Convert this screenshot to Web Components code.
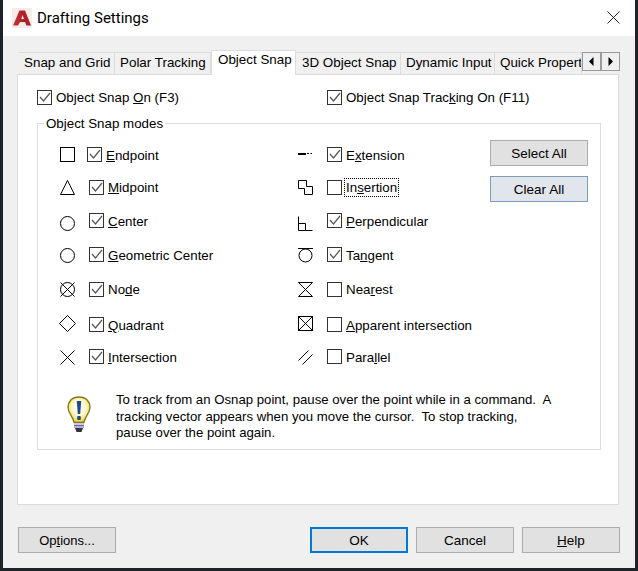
<!DOCTYPE html>
<html>
<head>
<meta charset="utf-8">
<title>Drafting Settings</title>
<style>
  html, body { margin: 0; padding: 0; background: #1d2329; }
  body { width: 638px; height: 571px; overflow: hidden; font: 13.33px "Liberation Sans", Arial, sans-serif; color: #000; }
</style>
</head>
<body>
<drafting-dialog></drafting-dialog>

<script>
const SNAP_ICONS = {
  square: '<rect x="0.5" y="0.5" width="14" height="14"/>',
  triangle: '<path d="M7.5 0.5 L14.5 14.5 H0.5 Z"/>',
  circle: '<circle cx="7.5" cy="7.5" r="7"/>',
  node: '<circle cx="7.5" cy="7.5" r="7"/><path d="M0.5 0.5 L14.5 14.5 M14.5 0.5 L0.5 14.5"/>',
  diamond: '<path d="M7.5 0.5 L15.5 8.5 L7.5 16.5 L-0.5 8.5 Z"/>',
  cross: '<path d="M0.5 0.5 L14.5 14.5 M14.5 0.5 L0.5 14.5"/>',
  extension: '<path d="M0 7 H8" stroke-width="2"/><path d="M9 6.5 H11 M12.5 6.5 H14"/>',
  insertion: '<path d="M0.5 0.5 H8.5 V6.5 H14.5 V14.5 H6.5 V8.5 H0.5 Z"/>',
  perpendicular: '<path d="M0.5 0.5 V14.5 H14.5 M0.5 7.5 H7.5 V14.5"/>',
  tangent: '<path d="M0 0.5 H15"/><circle cx="7.5" cy="7.5" r="6.5"/>',
  nearest: '<path d="M0.5 0.5 H14.5 L0.5 14.5 H14.5 Z"/>',
  apparent: '<rect x="0.5" y="0.5" width="14" height="14"/><path d="M0.5 0.5 L14.5 14.5 M14.5 0.5 L0.5 14.5"/>',
  parallel: '<path d="M0.5 10.5 L10.5 0.5 M4.5 14.5 L14.5 4.5"/>'
};

class SnapIcon extends HTMLElement {
  connectedCallback() {
    this.attachShadow({ mode: 'open' }).innerHTML = `
      <style>
        :host { display: block; width: 15px; height: 15px; }
        svg { display: block; fill: none; stroke: #000; stroke-width: 1; overflow: visible; }
      </style>
      <svg width="15" height="15" viewBox="0 0 15 15">${SNAP_ICONS[this.getAttribute('name')]}</svg>
    `;
  }
}
customElements.define('snap-icon', SnapIcon);

class SnapCheck extends HTMLElement {
  connectedCallback() {
    const on = this.hasAttribute('checked');
    const focus = this.hasAttribute('focused');
    this.attachShadow({ mode: 'open' }).innerHTML = `
      <style>
        :host { display: inline-flex; align-items: center; height: 15px; white-space: nowrap; }
        .box { width: 15px; height: 15px; box-sizing: border-box; border: 1px solid #333; background: #fff; flex: none; }
        svg { display: block; }
        .label { margin-left: 4px; line-height: 15px; }
        :host([low]) .label { padding-top: 2px; }
        .focus { outline: 1px dotted #000; outline-offset: 1px; }
      </style>
      <span class="box">${on ? '<svg width="13" height="13" viewBox="0 0 13 13"><path d="M2 6 L5.5 10 L12 2" fill="none" stroke="#555" stroke-width="1.2"/></svg>' : ''}</span>
      <span class="label ${focus ? 'focus' : ''}"><slot></slot></span>
    `;
  }
}
customElements.define('snap-check', SnapCheck);

class SnapRow extends HTMLElement {
  connectedCallback() {
    const dy = this.getAttribute('icon-dy') || 0;
    const dx = this.getAttribute('check-dx') || 0;
    this.attachShadow({ mode: 'open' }).innerHTML = `
      <style>
        :host { display: flex; height: 15px; align-items: flex-start; }
        .icon { width: 15px; margin-top: ${dy}px; flex: none; }
        .check { margin-left: ${dx}px; }
      </style>
      <div class="icon"><slot name="icon"></slot></div>
      <div class="check"><slot></slot></div>
    `;
  }
}
customElements.define('snap-row', SnapRow);

class DlgButton extends HTMLElement {
  connectedCallback() {
    this.attachShadow({ mode: 'open' }).innerHTML = `
      <style>
        :host { display: flex; flex: none; align-items: center; justify-content: center; box-sizing: border-box;
                width: 98px; height: 26px; background: #e1e1e1; border: 1px solid #adadad; font-size: 13.5px; }
        :host([hot]) { background: #e1e6ec; border-color: #7f9db9; }
        :host([primary]) { border: 2px solid #0078d7; }
      </style>
      <slot></slot>
    `;
  }
}
customElements.define('dlg-button', DlgButton);

class TitleBar extends HTMLElement {
  connectedCallback() {
    this.attachShadow({ mode: 'open' }).innerHTML = `
      <style>
        :host { display: flex; align-items: center; height: 36px; background: #fff; padding: 0 15px 0 9px; }
        .logo { width: 20px; height: 20px; margin-right: 5px; flex: none; display: block; }
        .title { flex: 1; font: 15px Roboto, "Noto Sans", sans-serif; color: #000; }
        .close { width: 13px; height: 13px; display: block; margin-top: -2px; }
      </style>
      <svg class="logo" viewBox="0 0 20 20">
        <defs>
          <linearGradient id="red" x1="0" y1="0" x2="1" y2="0">
            <stop offset="0" stop-color="#c6383c"/><stop offset="0.5" stop-color="#b02228"/><stop offset="1" stop-color="#a81e24"/>
          </linearGradient>
        </defs>
        <rect width="20" height="20" fill="#f8ece9"/>
        <path d="M1 17.5 L7.5 2.5 H13 L19 17.5 H14.5 L13 14 H8 L6 17.5 Z M9.2 11 H12 L10.6 7 Z" fill="url(#red)" fill-rule="evenodd"/>
      </svg>
      <span class="title">Drafting Settings</span>
      <svg class="close" viewBox="0 0 13 13"><path d="M0.5 0.5 L12.5 12.5 M12.5 0.5 L0.5 12.5" stroke="#222" stroke-width="1" fill="none"/></svg>
    `;
  }
}
customElements.define('title-bar', TitleBar);

class TabStrip extends HTMLElement {
  connectedCallback() {
    const tabs = [
      ['Snap and Grid', 96, 5], ['Polar Tracking', 96, 5], ['Object Snap', 85, 6],
      ['3D Object Snap', 105, 6], ['Dynamic Input', 94, 5], ['Quick Properties', 87, 5]
    ];
    const html = tabs.map(([t, w, p]) => `<div class="tab ${t === 'Object Snap' ? 'on' : ''}" style="width:${w}px;padding-left:${p}px"><span>${t}</span></div>`).join('');
    this.attachShadow({ mode: 'open' }).innerHTML = `
      <style>
        :host { display: flex; align-items: flex-end; height: 24px; padding-left: 2px; position: relative; z-index: 1; font-size: 13.4px; }
        .tab { box-sizing: border-box; height: 22px; background: #f0f0f0; border: 1px solid #dcdcdc; border-bottom: 0;
               border-left-width: 0; overflow: hidden; white-space: nowrap; line-height: 19px; flex: none; }
        .tab:first-child { border-left-width: 1px; }
        .on { background: #fff; border-width: 1px 1px 0 1px; margin-bottom: -1px; height: 25px; line-height: 18px; }
        .arrows { display: flex; flex: none; align-self: flex-start; margin-top: 2px; height: 19px; }
        .arrows div { box-sizing: border-box; width: 19px; height: 19px; background: #f0f0f0; border: 1px solid #9a9a9a;
                      display: flex; align-items: center; justify-content: center; }
        svg { display: block; }
      </style>
      ${html}
      <div class="arrows">
        <div><svg width="5" height="9"><path d="M4.5 0 V9 L0 4.5 Z"/></svg></div>
        <div><svg width="5" height="9"><path d="M0.5 0 V9 L5 4.5 Z"/></svg></div>
      </div>
    `;
  }
}
customElements.define('tab-strip', TabStrip);

class GroupBox extends HTMLElement {
  connectedCallback() {
    this.attachShadow({ mode: 'open' }).innerHTML = `
      <style>
        :host { display: block; }
        fieldset { margin: 0; padding: 0; border: 1px solid #dcdcdc; }
        legend { margin-left: 6px; padding: 0 2px; line-height: 15px; }
      </style>
      <fieldset><legend>${this.getAttribute('label')}</legend><slot></slot></fieldset>
    `;
  }
}
customElements.define('group-box', GroupBox);

class HintBulb extends HTMLElement {
  connectedCallback() {
    this.attachShadow({ mode: 'open' }).innerHTML = `
      <style>
        :host { display: block; width: 24px; height: 37px; }
        svg { display: block; }
      </style>
      <svg width="24" height="37" viewBox="0 0 24 37">
        <defs>
          <radialGradient id="glass" cx="50%" cy="42%" r="58%">
            <stop offset="0" stop-color="#ffffff"/><stop offset="0.55" stop-color="#fbf8cf"/><stop offset="0.85" stop-color="#efe25a"/><stop offset="1" stop-color="#d0bc30"/>
          </radialGradient>
        </defs>
        <path d="M12 1 C5 1 1 5.5 1 11.5 C1 17 6 20 7 26.5 H17 C18 20 23 17 23 11.5 C23 5.5 19 1 12 1 Z" fill="url(#glass)" stroke="#857520" stroke-width="1.3"/>
        <path d="M9.8 5 H14.2 L13.2 18 H10.8 Z" fill="#1c4a86"/>
        <rect x="10.2" y="20" width="3.6" height="4" rx="1" fill="#1c4a86"/>
        <rect x="7" y="27" width="10" height="2" fill="#c9c4e6"/>
        <rect x="7" y="29" width="10" height="1" fill="#6f6a9a"/>
        <rect x="7" y="30" width="10" height="2" fill="#b3add8"/>
        <path d="M8 32 H16 L14.5 36 H9.5 Z" fill="#33333f"/>
      </svg>
    `;
  }
}
customElements.define('hint-bulb', HintBulb);

class ObjectSnapPage extends HTMLElement {
  connectedCallback() {
    // each row: [icon, icon offset, checkbox offset, checked, label, focused]; low = label sits 1px lower
    const rows = [
      { low: true, cells: [['square', 0, -2, true, '<u>E</u>ndpoint'], ['extension', 0, 0, true, 'E<u>x</u>tension']] },
      { low: false, cells: [['triangle', 0, 0, true, '<u>M</u>idpoint'], ['insertion', 0, 0, false, 'In<u>s</u>ertion', true]] },
      { low: true, cells: [['circle', 3, 0, true, '<u>C</u>enter'], ['perpendicular', 3, 0, true, '<u>P</u>erpendicular']] },
      { low: true, cells: [['circle', 1, 0, true, '<u>G</u>eometric Center'], ['tangent', 1, 0, true, 'Ta<u>n</u>gent']] },
      { low: false, cells: [['node', 0, 0, true, 'No<u>d</u>e'], ['nearest', 0, 0, false, 'Nea<u>r</u>est']] },
      { low: true, cells: [['diamond', -2, 0, true, '<u>Q</u>uadrant'], ['apparent', -1, 0, false, '<u>A</u>pparent intersection']] },
      { low: true, cells: [['cross', 1, 0, true, '<u>I</u>ntersection'], ['parallel', 1, 0, false, 'Para<u>l</u>lel']] }
    ];
    const cell = ([icon, dy, dx, on, label, focus], low) => `
      <snap-row icon-dy="${dy}" check-dx="${14 + dx}">
        <snap-icon slot="icon" name="${icon}"></snap-icon>
        <snap-check ${on ? 'checked' : ''} ${focus ? 'focused' : ''} ${low ? 'low' : ''}>${label}</snap-check>
      </snap-row>`;
    const cells = rows.map(r => r.cells.map(c => cell(c, r.low)).join('')).join('');
    this.attachShadow({ mode: 'open' }).innerHTML = `
      <style>
        :host { display: block; box-sizing: border-box; height: 431px; background: #fff; border: 1px solid #dcdcdc;
                padding: 15px 17px 0 19px; }
        .top { display: grid; grid-template-columns: 290px 1fr; height: 16px; align-items: start; margin-bottom: 10px; }
        .modes { display: grid; grid-template-columns: 238px 192px 98px; padding: 16px 0 0 22px;
                 grid-template-rows: 33px 33px 34px 35px 35px 32px 15px; }
        .btns { grid-column: 3; grid-row: 1 / span 7; display: flex; flex-direction: column; gap: 10px; margin-top: -7px; }
        .hint { display: flex; margin: 32px 0 0 29px; height: 53px; }
        hint-bulb { flex: none; }
        .txt { margin: -4px 0 0 25px; line-height: 16.5px; white-space: nowrap; font-size: 13.2px; }
      </style>
      <div class="top">
        <snap-check checked>Object Snap <u>O</u>n (F3)</snap-check>
        <snap-check checked>Object Snap Trac<u>k</u>ing On (F11)</snap-check>
      </div>
      <group-box label="Object Snap modes">
        <div class="modes">
          <div class="btns">
            <dlg-button>Select All</dlg-button>
            <dlg-button hot>Clear All</dlg-button>
          </div>
          ${cells}
        </div>
        <div class="hint">
          <hint-bulb></hint-bulb>
          <p class="txt">To track from an Osnap point, pause over the point while in a command.&nbsp; A<br>tracking vector appears when you move the cursor.&nbsp; To stop tracking,<br>pause over the point again.</p>
        </div>
      </group-box>
    `;
  }
}
customElements.define('object-snap-page', ObjectSnapPage);

class DraftingDialog extends HTMLElement {
  connectedCallback() {
    this.attachShadow({ mode: 'open' }).innerHTML = `
      <style>
        :host { display: block; box-sizing: border-box; width: 632px; height: 568px; margin-left: 3px; background: #f0f0f0; }
        .body { padding: 14px 16px 0 14px; }
        .foot { display: flex; gap: 8px; padding: 22px 0 0 1px; }
        .foot dlg-button:first-child { margin-right: 186px; }
      </style>
      <title-bar></title-bar>
      <div class="body">
        <tab-strip></tab-strip>
        <object-snap-page></object-snap-page>
        <div class="foot">
          <dlg-button style="font-size: 13px">Op<u>t</u>ions...</dlg-button>
          <dlg-button primary>OK</dlg-button>
          <dlg-button>Cancel</dlg-button>
          <dlg-button><u>H</u>elp</dlg-button>
        </div>
      </div>
    `;
  }
}
customElements.define('drafting-dialog', DraftingDialog);
</script>
</body>
</html>
